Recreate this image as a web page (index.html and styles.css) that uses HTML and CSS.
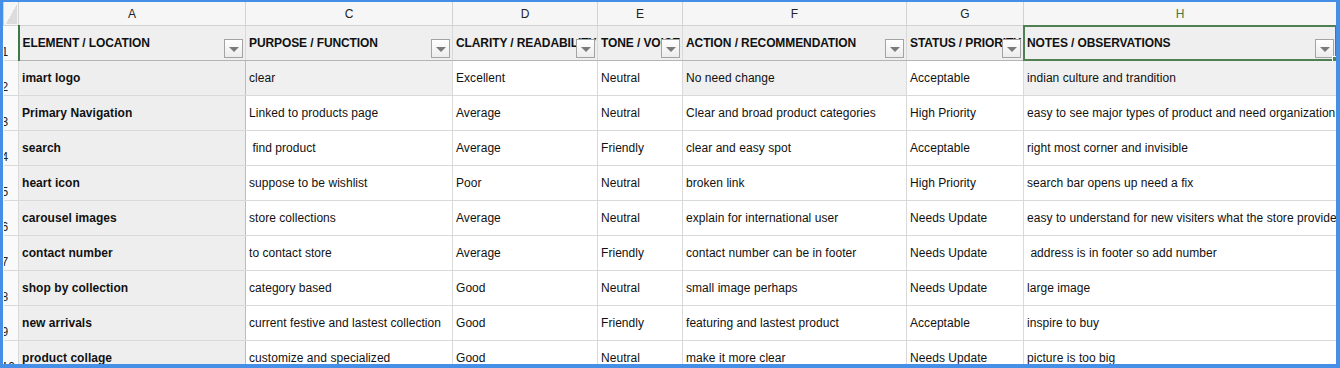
FILE: index.html
```html
<!DOCTYPE html>
<html>
<head>
<meta charset="UTF-8">
<title>Website content audit</title>
<link rel="stylesheet" href="styles.css">
</head>
<body>
<div class="frame">
  <table class="sheet">
    <colgroup>
      <col class="w-rowhead"><col class="w-a"><col class="w-c"><col class="w-d"><col class="w-e"><col class="w-f"><col class="w-g"><col class="w-h">
    </colgroup>
    <thead>
      <tr class="letters">
        <th class="corner"><span class="tri"></span></th>
        <th>A</th><th>C</th><th>D</th><th>E</th><th>F</th><th>G</th><th class="active">H</th>
      </tr>
    </thead>
    <tbody>
      <tr class="titles">
        <th class="num num-active">1</th>
        <td>ELEMENT / LOCATION<span class="filter"></span></td>
        <td>PURPOSE / FUNCTION<span class="filter"></span></td>
        <td>CLARITY / READABILITY<span class="filter"></span></td>
        <td>TONE / VOICE<span class="filter"></span></td>
        <td>ACTION / RECOMMENDATION<span class="filter"></span></td>
        <td>STATUS / PRIORITY<span class="filter"></span></td>
        <td class="selected">NOTES / OBSERVATIONS<span class="filter"></span><span class="handle"></span></td>
      </tr>
      <tr>
        <th class="num">2</th>
        <td class="key">imart logo</td><td class="fill">clear</td><td>Excellent</td><td>Neutral</td><td class="fill">No need change</td><td>Acceptable</td><td class="fill">indian culture and trandition</td>
      </tr>
      <tr>
        <th class="num">3</th>
        <td class="key">Primary Navigation</td><td>Linked to products page</td><td>Average</td><td>Neutral</td><td>Clear and broad product categories</td><td>High Priority</td><td>easy to see major types of product and need organization</td>
      </tr>
      <tr>
        <th class="num">4</th>
        <td class="key">search</td><td> find product</td><td>Average</td><td>Friendly</td><td>clear and easy spot</td><td>Acceptable</td><td>right most corner and invisible</td>
      </tr>
      <tr>
        <th class="num">5</th>
        <td class="key">heart icon</td><td>suppose to be wishlist</td><td>Poor</td><td>Neutral</td><td>broken link</td><td>High Priority</td><td>search bar opens up need a fix</td>
      </tr>
      <tr>
        <th class="num">6</th>
        <td class="key">carousel images</td><td>store collections</td><td>Average</td><td>Neutral</td><td>explain for international user</td><td>Needs Update</td><td>easy to understand for new visiters what the store provides</td>
      </tr>
      <tr>
        <th class="num">7</th>
        <td class="key">contact number</td><td>to contact store</td><td>Average</td><td>Friendly</td><td>contact number can be in footer</td><td>Needs Update</td><td> address is in footer so add number</td>
      </tr>
      <tr>
        <th class="num">8</th>
        <td class="key">shop by collection</td><td>category based</td><td>Good</td><td>Neutral</td><td>small image perhaps</td><td>Needs Update</td><td>large image</td>
      </tr>
      <tr>
        <th class="num">9</th>
        <td class="key">new arrivals</td><td>current festive and lastest collection</td><td>Good</td><td>Friendly</td><td>featuring and lastest product</td><td>Acceptable</td><td>inspire to buy</td>
      </tr>
      <tr>
        <th class="num">10</th>
        <td class="key">product collage</td><td>customize and specialized</td><td>Good</td><td>Neutral</td><td>make it more clear</td><td>Needs Update</td><td>picture is too big</td>
      </tr>
    </tbody>
  </table>
</div>
</body>
</html>
```

FILE: styles.css
```css
html {
	font-family: "Liberation Sans", Arial, sans-serif;
	color: #111;
	font-size: 12px;
}
body {
	margin: 0;
	background: #fff;
}

.frame {
	box-sizing: border-box;
	width: 1340px;
	height: 368px;
	overflow: hidden;
	border-style: solid;
	border-color: #4590e6;
	border-width: 2px 4px 4px 3px;
	background: #fff;
}

.sheet {
	table-layout: fixed;
	border-collapse: collapse;
	width: 1333px;
}
.w-rowhead { width: 15px; }
.w-a { width: 227px; }
.w-c { width: 207px; }
.w-d { width: 145px; }
.w-e { width: 85px; }
.w-f { width: 224px; }
.w-g { width: 117px; }
.w-h { width: 313px; }

.sheet td,
.sheet th {
	border: 1px solid #d9d9d9;
	padding: 0 3px;
	white-space: pre;
	overflow: hidden;
	text-align: left;
	font-weight: normal;
	position: relative;
}

/* column letters */
.sheet .letters th {
	height: 23px;
	background: #f6f6f6;
	text-align: center;
	color: #222;
	border-color: #d2d2d2;
	border-top: 0;
}
.sheet .letters th.active {
	color: #3f7a46;
}
.corner .tri {
	position: absolute;
	left: 2px;
	top: 2px;
	right: 1px;
	bottom: 1px;
	background: linear-gradient(to bottom right, transparent 50%, #dcdcdc 50%);
}

/* row numbers */
.sheet .num {
	height: 33px;
	vertical-align: bottom;
	background: #fafafa;
	color: #222;
	text-indent: -2px;
	padding: 0 0 1px 0;
	border-left: 0;
}
.sheet .num-active {
	border-right: 2px solid #3f7a46;
}

.sheet td {
	vertical-align: middle;
	padding: 0 3px 0 3px;
	letter-spacing: 0.05px;
}

/* header titles */
.sheet .titles td {
	background: #efefef;
	font-weight: bold;
	letter-spacing: -0.1px;
	border-bottom-color: #b5b5b5;
}
.filter {
	position: absolute;
	right: 2px;
	bottom: 2px;
	width: 17px;
	height: 17px;
	border: 1px solid #a3a3a3;
	background: linear-gradient(#ffffff, #ececec);
}
.filter::after {
	content: "";
	position: absolute;
	left: 4px;
	top: 7px;
	border-left: 5px solid transparent;
	border-right: 5px solid transparent;
	border-top: 5px solid #7a7a7a;
}

.sheet .selected {
	overflow: visible;
}
.selected::before {
	content: "";
	position: absolute;
	left: -1px;
	top: -1px;
	right: -1px;
	bottom: -1px;
	border: 2px solid #4f7f53;
	pointer-events: none;
}
.handle {
	position: absolute;
	right: -4px;
	bottom: -4px;
	width: 6px;
	height: 6px;
	background: #4f7f53;
	border: 1px solid #fff;
}

/* data */
.sheet .key {
	background: #eeeeee;
	font-weight: bold;
	border-right-color: #bdbdbd;
}
.sheet .fill {
	background: #f0f0f0;
}
```
